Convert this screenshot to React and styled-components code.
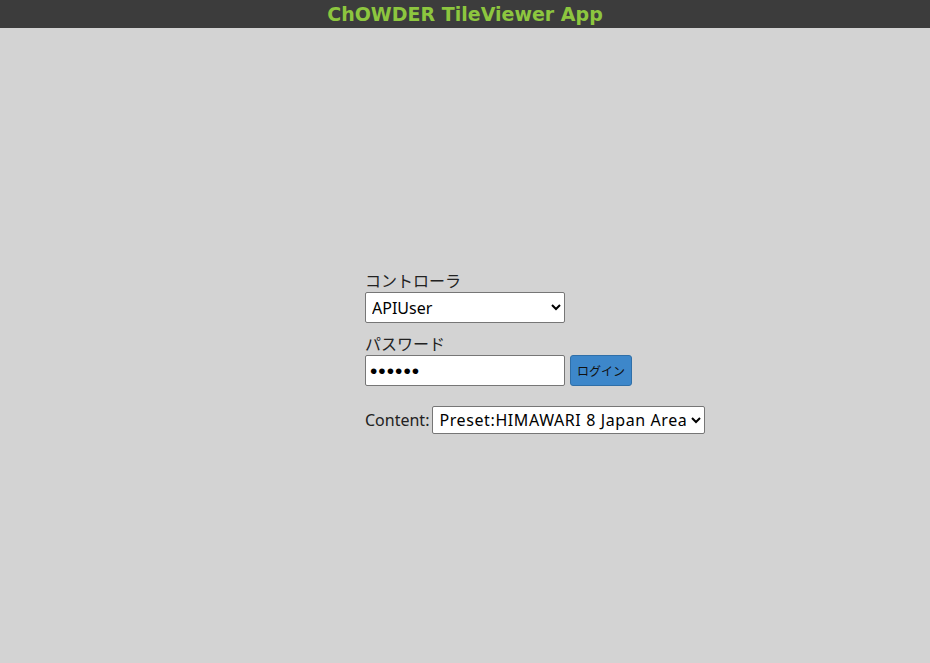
import React from "react";
import styled, { createGlobalStyle } from "styled-components";

const Global = createGlobalStyle`
  html, body { margin: 0; padding: 0; background: #d3d3d3; }
  body { font-family: "Noto Sans", "Noto Sans CJK JP", sans-serif; color: #222; }
  #root { min-height: 663px; }
`;

const Header = styled.header`
  height: 28px;
  background: #3c3c3c;
  display: flex;
  align-items: center;
  justify-content: center;
`;

const Title = styled.h1`
  margin: 0;
  font-family: "DejaVu Sans", Verdana, sans-serif;
  font-weight: bold;
  font-size: 19px;
  color: #8dc63f;
`;

const Column = styled.main`
  width: 200px;
  margin: 0 auto;
  padding-top: 242px;
  display: flex;
  flex-direction: column;
`;

const Label = styled.div`
  font-size: 16px;
  line-height: 22px;
  color: #222;
`;

const Select = styled.select`
  box-sizing: border-box;
  flex: none;
  width: ${(p) => p.$w || "200px"};
  height: ${(p) => p.$h || "31px"};
  font-family: "Noto Sans", "Noto Sans CJK JP", sans-serif;
  font-size: 16px;
  letter-spacing: ${(p) => p.$ls || "0"};
  padding: 0 2px;
  background: #fff;
  border: 1px solid #767676;
  border-radius: 2px;
  color: #000;
`;

const Row = styled.div`
  display: flex;
  align-items: center;
  gap: ${(p) => p.$gap || "5px"};
  margin-top: ${(p) => p.$mt || "0"};
  white-space: nowrap;
`;

const Field = styled.div`
  margin-top: ${(p) => p.$mt || "0"};
`;

const Input = styled.input`
  box-sizing: border-box;
  width: 200px;
  height: 31px;
  flex: none;
  font-size: 21px;
  letter-spacing: 1px;
  padding: 0 4px;
  border: 1px solid #767676;
  border-radius: 2px;
  background: #fff;
`;

const Button = styled.button`
  flex: none;
  height: 31px;
  padding: 0 6px;
  background: #3d87ca;
  color: #111;
  border: 1px solid #2f6fa8;
  border-radius: 3px;
  font-family: "Noto Sans CJK JP", sans-serif;
  font-size: 12px;
`;

const Inline = styled.span`
  font-size: 16px;
  flex: none;
`;

export default function App() {
  return (
    <>
      <Global />
      <Header>
        <Title>ChOWDER TileViewer App</Title>
      </Header>
      <Column>
        <Label>コントローラ</Label>
        <Select defaultValue="APIUser">
          <option>APIUser</option>
        </Select>
        <Field $mt="10px">
          <Label>パスワード</Label>
          <Row>
            <Input type="password" defaultValue="123456" />
            <Button>ログイン</Button>
          </Row>
        </Field>
        <Row $mt="20px" $gap="3px">
          <Inline>Content:</Inline>
          <Select $w="273px" $h="28px" $ls="0.6px" defaultValue="h8">
            <option value="h8">Preset:HIMAWARI 8 Japan Area</option>
          </Select>
        </Row>
      </Column>
    </>
  );
}
